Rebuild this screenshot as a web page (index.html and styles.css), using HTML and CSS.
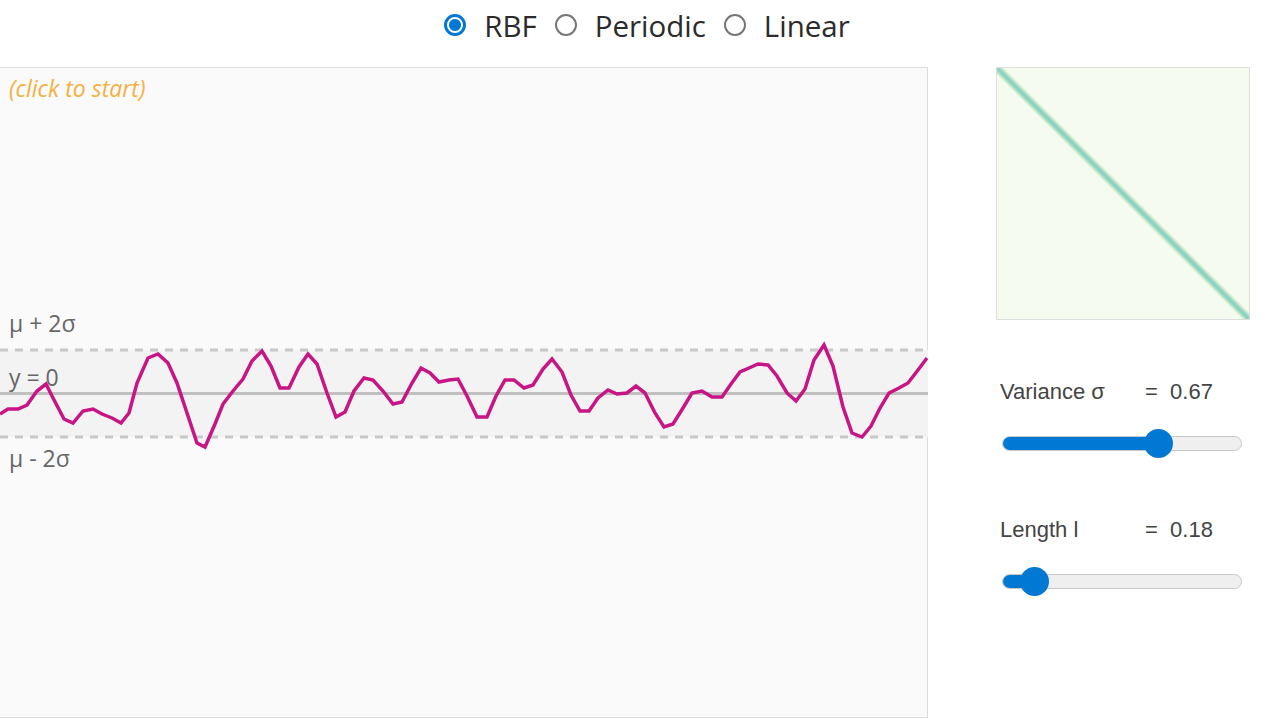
FILE: index.html
```html
<!DOCTYPE html>
<html>
<head>
<meta charset="utf-8">
<link rel="stylesheet" href="styles.css">
</head>
<body>
<div class="header">
  <label class="opt"><input type="radio" name="k" checked><span>RBF</span></label>
  <label class="opt"><input type="radio" name="k"><span>Periodic</span></label>
  <label class="opt"><input type="radio" name="k"><span>Linear</span></label>
</div>
<div class="main">
  <div class="chart">
    <svg class="plot" width="928" height="649" viewBox="0 67 928 649">
      <rect x="0" y="349" width="928" height="87" class="band"/>
      <line x1="0" y1="349" x2="928" y2="349" class="dash"/>
      <line x1="0" y1="436" x2="928" y2="436" class="dash"/>
      <line x1="0" y1="392.5" x2="928" y2="392.5" class="zero"/>
      <text x="9" y="96" class="hint">(click to start)</text>
      <text x="9" y="331" class="lbl">μ + 2σ</text>
      <text x="9" y="385" class="lbl">y = 0</text>
      <text x="9" y="466" class="lbl">μ - 2σ</text>
      <polyline class="curve" points="0,413 8,408 18,408 27,404 37,390 46,383 53,397 64,418 73,422 83,410 93,408 102,413 112,417 121,422 129,412 137,382 148,357 158,353 168,362 177,382 187,412 197,442 205,446 215,423 223,403 233,390 243,378 252,360 262,350 271,365 280,387 289,387 299,366 308,353 317,363 327,392 336,416 345,411 354,390 364,377 373,379 383,390 393,403 402,401 412,382 421,367 430,372 439,381 449,379 458,378 467,395 477,416 487,416 496,395 505,379 514,379 524,387 533,384 543,368 552,358 562,371 571,394 580,410 589,410 598,397 608,389 617,393 627,392 636,385 645,392 655,412 664,426 673,423 683,407 692,392 702,390 712,396 722,396 731,383 740,371 749,367 758,363 768,364 777,375 787,392 796,400 805,388 814,359 824,344 833,365 843,406 852,432 862,436 871,425 880,407 889,392 899,387 908,382 918,369 927,357"/>
    </svg>
  </div>
  <div class="side">
    <div class="matrix">
      <svg width="252" height="251" viewBox="0 0 252 251">
        <rect x="0" y="0" width="252" height="251" fill="#f5fbef"/>
        <line x1="0" y1="0" x2="252" y2="251" stroke="#d8f0d0" stroke-width="9"/>
        <line x1="0" y1="0" x2="252" y2="251" stroke="#ace0ca" stroke-width="6"/>
        <line x1="0" y1="0" x2="252" y2="251" stroke="#8cd2c2" stroke-width="3"/>
      </svg>
    </div>
    <div class="control first">
      <div class="row"><span class="name">Variance σ</span><span class="val">=&nbsp; 0.67</span></div>
      <div class="slider">
        <div class="track"><div class="fill" style="width:156px"></div></div>
        <div class="thumb" style="left:156px"></div>
      </div>
    </div>
    <div class="control">
      <div class="row"><span class="name">Length l</span><span class="val">=&nbsp; 0.18</span></div>
      <div class="slider">
        <div class="track"><div class="fill" style="width:32px"></div></div>
        <div class="thumb" style="left:32px"></div>
      </div>
    </div>
  </div>
</div>
</body>
</html>
```
FILE: styles.css
```css
html, body {
  margin: 0;
  padding: 0;
  background: #fff;
  overflow: hidden;
}
body {
  width: 1284px;
  height: 718px;
  font-family: "Open Sans", "Noto Sans", sans-serif;
  color: #333;
}
.header {
  height: 52px;
  display: flex;
  justify-content: center;
  align-items: center;
  gap: 18px;
  padding-left: 10px;
  box-sizing: border-box;
}
.opt {
  display: flex;
  align-items: center;
  gap: 18px;
  font-size: 29.5px;
  line-height: 40px;
  color: #2b2b2b;
  cursor: pointer;
}
.opt input {
  appearance: none;
  -webkit-appearance: none;
  margin: 0;
  width: 22px;
  height: 22px;
  border-radius: 50%;
  border: 2px solid #777;
  box-sizing: border-box;
  background: #fff;
  position: relative;
  top: -1px;
}
.opt input:checked {
  border: 3px solid #0078d4;
  background: radial-gradient(circle, #0078d4 0 5.5px, #fff 6.5px);
}
.main {
  display: flex;
  margin-top: 15px;
  gap: 68px;
}
.chart {
  width: 927px;
  height: 649px;
  background: #fafafa;
  border: 1px solid #ddd;
  border-left: none;
}
.plot {
  display: block;
}
.band { fill: #f3f3f3; }
.dash {
  stroke: #c8c8c8;
  stroke-width: 3;
  stroke-dasharray: 8 7;
}
.zero {
  stroke: #c0c0c0;
  stroke-width: 3;
}
.curve {
  fill: none;
  stroke: #c71585;
  stroke-width: 3.5;
  stroke-linejoin: miter;
}
.hint {
  font-family: "Open Sans", sans-serif;
  font-style: italic;
  font-size: 23px;
  fill: #f5b041;
}
.lbl {
  font-family: "Open Sans", sans-serif;
  font-size: 23px;
  fill: #666;
}
.side {
  display: flex;
  flex-direction: column;
  width: 254px;
}
.matrix {
  width: 252px;
  height: 251px;
  border: 1px solid #ddd;
}
.matrix svg { display: block; }
.control {
  font-family: "Liberation Sans", Arial, sans-serif;
  font-size: 22px;
  color: #444;
  padding-left: 4px;
}
.control.first { margin-top: 59px; }
.control + .control { margin-top: 59px; }
.row {
  display: flex;
  height: 26px;
  line-height: 26px;
}
.name { width: 145px; }
.slider {
  position: relative;
  margin-top: 24px;
  margin-left: 2px;
  width: 240px;
  height: 29px;
}
.track {
  position: absolute;
  top: 7px;
  left: 0;
  right: 0;
  height: 15px;
  box-sizing: border-box;
  border: 1px solid #c8c8c8;
  background: #efefef;
  border-radius: 8px;
  overflow: hidden;
}
.fill {
  height: 100%;
  background: #0078d4;
}
.thumb {
  position: absolute;
  top: 0;
  width: 29px;
  height: 29px;
  margin-left: -14.5px;
  border-radius: 50%;
  background: #0078d4;
}
```
